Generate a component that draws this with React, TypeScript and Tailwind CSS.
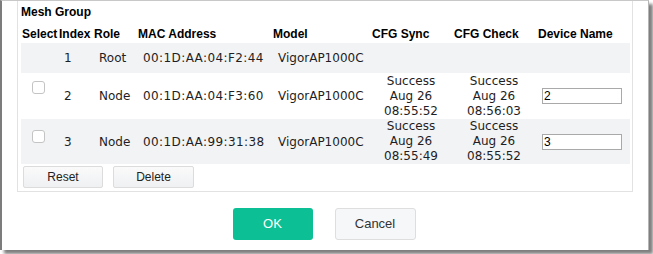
import React from 'react'

interface MeshRow {
  index: number
  role: string
  mac: string
  model: string
  sync?: string[]
  check?: string[]
  name?: string
  selectable: boolean
  height: string
  boxTop: string
  shaded: boolean
}

const rows: MeshRow[] = [
  { index: 1, role: 'Root', mac: '00:1D:AA:04:F2:44', model: 'VigorAP1000C', selectable: false, height: 'h-[30px]', boxTop: 'mt-0', shaded: true },
  {
    index: 2, role: 'Node', mac: '00:1D:AA:04:F3:60', model: 'VigorAP1000C',
    sync: ['Success', 'Aug 26', '08:55:52'], check: ['Success', 'Aug 26', '08:56:03'],
    name: '2', selectable: true, height: 'h-[46px]', boxTop: 'mt-[8px]', shaded: false,
  },
  {
    index: 3, role: 'Node', mac: '00:1D:AA:99:31:38', model: 'VigorAP1000C',
    sync: ['Success', 'Aug 26', '08:55:49'], check: ['Success', 'Aug 26', '08:55:52'],
    name: '3', selectable: true, height: 'h-[45px]', boxTop: 'mt-[11px]', shaded: true,
  },
]

// column template shared by header and rows
const cols = 'grid grid-cols-[38px_35px_44px_135px_99px_82px_84px_91px]'

function Stamp({ lines, width }: { lines?: string[]; width: string }) {
  if (!lines) return <div />
  return (
    <div className={`${width} flex flex-col items-center leading-[15px]`}>
      {lines.map((l) => (
        <span key={l}>{l}</span>
      ))}
    </div>
  )
}

function Row({ row }: { row: MeshRow }) {
  return (
    <div className={`${cols} ${row.height} items-center ${row.shaded ? 'bg-[#f2f3f5]' : 'bg-white'}`}>
      <div className="self-start pl-[11px]">
        {row.selectable && (
          <div className={`${row.boxTop} w-[13px] h-[13px] rounded-[3px] border border-[#c4c4c4] bg-white`} />
        )}
      </div>
      <div className="pl-[5px]">{row.index}</div>
      <div className="pl-[5px]">{row.role}</div>
      <div className="pl-[5px] whitespace-nowrap tracking-[0.4px]">{row.mac}</div>
      <div className="pl-[5px]">{row.model}</div>
      <Stamp lines={row.sync} width="w-[78px]" />
      <Stamp lines={row.check} width="w-[80px]" />
      <div className="pl-[4px]">
        {row.name && (
          <input
            readOnly
            value={row.name}
            className="w-[80px] h-[16px] border border-[#a9a9a9] bg-white px-[1px] text-[12px] leading-[14px] text-black outline-none font-['Liberation_Sans',Arial,sans-serif]"
          />
        )}
      </div>
    </div>
  )
}

export default function App() {
  return (
    <div className="w-[653px] h-[254px] bg-white overflow-hidden font-['DejaVu_Sans',Verdana,sans-serif] text-[12px] text-[#1e1e24]">
      <div className="w-[649px] h-[250px] bg-white border-l-2 border-[#7c7c7c] border-r border-r-[#b5b5b5] border-t border-t-[#c8c8c8] shadow-[4px_4px_3px_rgba(0,0,0,0.5)] pl-[15px] pr-[15px] flex flex-col">
        <div className="w-[616px] border-x border-b border-[#e2e2e2] pl-[3px] pr-[2px] pt-[4px] pb-[3px]">
          <div className="font-['Liberation_Sans',Arial,sans-serif] font-bold text-[12px] leading-[15px] text-black">
            Mesh Group
          </div>
          <div className={`${cols} mt-[5px] h-[18px] items-center font-['Liberation_Sans',Arial,sans-serif] font-bold text-black whitespace-nowrap`}>
            <div className="pl-[1px]">Select</div>
            <div>Index</div>
            <div>Role</div>
            <div>MAC Address</div>
            <div>Model</div>
            <div>CFG Sync</div>
            <div>CFG Check</div>
            <div>Device Name</div>
          </div>
          {rows.map((r) => (
            <Row key={r.index} row={r} />
          ))}
          <div className="mt-[2px] flex gap-[10px] pl-[2px] font-['Liberation_Sans',Arial,sans-serif] text-[12px] text-[#222]">
            <button className="w-[80px] h-[22px] border border-[#dcdcdc] rounded-[2px] bg-gradient-to-b from-[#fafafa] to-[#eff0f2]">
              Reset
            </button>
            <button className="w-[81px] h-[22px] border border-[#dcdcdc] rounded-[2px] bg-gradient-to-b from-[#fafafa] to-[#eff0f2]">
              Delete
            </button>
          </div>
        </div>
        <div className="mt-[16px] pr-[2px] flex justify-center gap-[22px] font-['Liberation_Sans',Arial,sans-serif] text-[13px]">
          <button className="w-[80px] h-[32px] rounded-[3px] bg-[#0dbf94] text-white">OK</button>
          <button className="w-[81px] h-[32px] rounded-[3px] border border-[#dedede] bg-[#f6f7f9] text-[#333]">
            Cancel
          </button>
        </div>
      </div>
    </div>
  )
}
